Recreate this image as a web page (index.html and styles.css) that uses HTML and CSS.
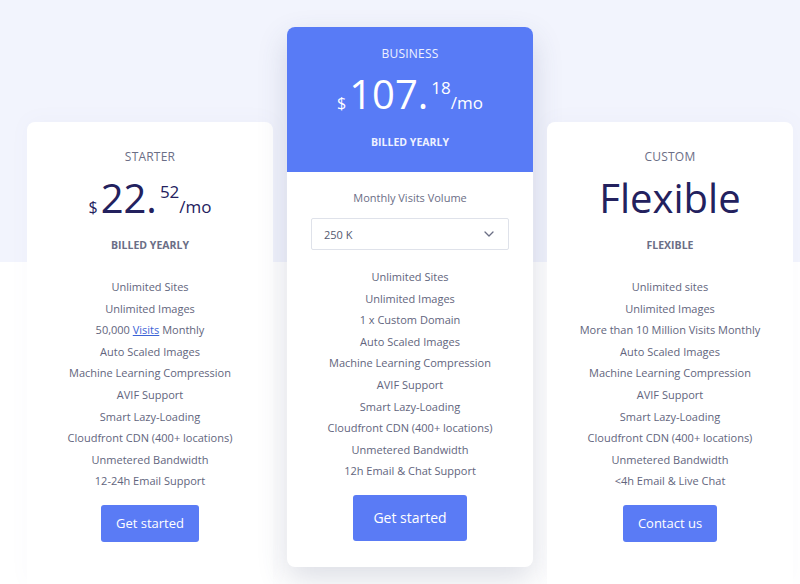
FILE: index.html
```html
<!DOCTYPE html>
<html>
<head>
<meta charset="utf-8">
<link rel="stylesheet" href="styles.css">
</head>
<body>
<div class="page">
  <div class="plans">
    <div class="card side">
      <div class="head">
        <div class="plan-name">STARTER</div>
        <div class="price"><span class="cur">$</span><span class="big">22.</span><span class="cents">52</span><span class="per">/mo</span></div>
        <div class="billed">BILLED YEARLY</div>
      </div>
      <ul class="features">
        <li>Unlimited Sites</li>
        <li>Unlimited Images</li>
        <li>50,000 <a href="#">Visits</a> Monthly</li>
        <li>Auto Scaled Images</li>
        <li>Machine Learning Compression</li>
        <li>AVIF Support</li>
        <li>Smart Lazy-Loading</li>
        <li>Cloudfront CDN (400+ locations)</li>
        <li>Unmetered Bandwidth</li>
        <li>12-24h Email Support</li>
      </ul>
      <a class="btn" href="#">Get started</a>
    </div>

    <div class="card featured">
      <div class="head blue">
        <div class="plan-name">BUSINESS</div>
        <div class="price"><span class="cur">$</span><span class="big">107.</span><span class="cents">18</span><span class="per">/mo</span></div>
        <div class="billed">BILLED YEARLY</div>
      </div>
      <div class="volume">
        <div class="vol-label">Monthly Visits Volume</div>
        <div class="select"><span>250 K</span>
          <svg width="10" height="6" viewBox="0 0 10 6"><path d="M1 1l4 4 4-4" fill="none" stroke="#6b6f85" stroke-width="1.3" stroke-linecap="round" stroke-linejoin="round"/></svg>
        </div>
      </div>
      <ul class="features">
        <li>Unlimited Sites</li>
        <li>Unlimited Images</li>
        <li>1 x Custom Domain</li>
        <li>Auto Scaled Images</li>
        <li>Machine Learning Compression</li>
        <li>AVIF Support</li>
        <li>Smart Lazy-Loading</li>
        <li>Cloudfront CDN (400+ locations)</li>
        <li>Unmetered Bandwidth</li>
        <li>12h Email &amp; Chat Support</li>
      </ul>
      <a class="btn large" href="#">Get started</a>
    </div>

    <div class="card side">
      <div class="head">
        <div class="plan-name">CUSTOM</div>
        <div class="price flex-price">Flexible</div>
        <div class="billed">FLEXIBLE</div>
      </div>
      <ul class="features">
        <li>Unlimited sites</li>
        <li>Unlimited Images</li>
        <li>More than 10 Million Visits Monthly</li>
        <li>Auto Scaled Images</li>
        <li>Machine Learning Compression</li>
        <li>AVIF Support</li>
        <li>Smart Lazy-Loading</li>
        <li>Cloudfront CDN (400+ locations)</li>
        <li>Unmetered Bandwidth</li>
        <li>&lt;4h Email &amp; Live Chat</li>
      </ul>
      <a class="btn" href="#">Contact us</a>
    </div>
  </div>
</div>
</body>
</html>
```

FILE: styles.css
```css
* { box-sizing: border-box; }
html, body { margin: 0; padding: 0; }
body {
  font-family: "Open Sans", "Noto Sans", sans-serif;
  background: #fff;
  width: 800px;
  height: 584px;
  overflow: hidden;
}
.page {
  background: linear-gradient(to bottom, #f2f4fd 0, #f2f4fd 262px, #ffffff 262px);
  height: 584px;
}
.plans {
  display: flex;
  align-items: flex-start;
  gap: 14px;
  padding: 27px 0 0 27px;
}
.card {
  width: 246px;
  background: #fff;
  border-radius: 8px;
  display: flex;
  flex-direction: column;
  align-items: center;
  text-align: center;
}
.side {
  margin-top: 95px;
  height: 462px;
  border-radius: 8px 8px 0 0;
  box-shadow: 0 -2px 20px rgba(120, 130, 170, 0.04);
}
.featured {
  height: 540px;
  overflow: hidden;
  box-shadow: 0 12px 30px rgba(60, 70, 110, 0.18);
}
.head {
  width: 100%;
  padding-top: 27px;
  display: flex;
  flex-direction: column;
  align-items: center;
}
.head.blue {
  background: #587bf6;
  color: #fff;
  height: 145px;
  padding-top: 19px;
}
.plan-name {
  font-size: 12px;
  color: #6b6e86;
  letter-spacing: 0.2px;
  line-height: 16px;
}
.blue .plan-name { color: #eef1ff; }
.price {
  display: flex;
  align-items: baseline;
  color: #23215e;
  margin-top: 11px;
  height: 44px;
}
.blue .price { color: #fff; margin-top: 10px; }
.price .cur { font-size: 16px; margin-right: 3px; }
.price .big { font-size: 40px; line-height: 44px; }
.price .cents { font-size: 17px; align-self: flex-start; margin-top: 4px; margin-left: 3px; }
.price .per { font-size: 17px; }
.flex-price {
  font-size: 40px;
  line-height: 44px;
  display: block;
}
.billed {
  font-size: 10.5px;
  font-weight: 700;
  color: #6b6e86;
  margin-top: 18px;
  line-height: 14px;
}
.blue .billed { color: #eef1ff; margin-top: 19px; }
.volume {
  width: 100%;
  padding: 18px 24px 0;
}
.vol-label {
  font-size: 11px;
  color: #6b6e86;
  line-height: 16px;
}
.select {
  margin-top: 12px;
  height: 32px;
  border: 1px solid #dfe2ea;
  border-radius: 2px;
  display: flex;
  align-items: center;
  justify-content: space-between;
  padding: 0 14px 0 12px;
  font-size: 11px;
  color: #55596f;
}
.features {
  list-style: none;
  margin: 0;
  padding: 0;
  margin-top: 24px;
}
.featured .features { margin-top: 16px; }
.features li {
  font-size: 11px;
  color: #62657d;
  line-height: 21.6px;
}
.features a { color: #3b63d6; text-decoration: underline; }
.btn {
  display: inline-block;
  background: #5a7bf5;
  color: #fff;
  text-decoration: none;
  font-size: 13px;
  border-radius: 3px;
  padding: 0 15px;
  height: 37px;
  line-height: 37px;
  margin-top: 13px;
}
.btn.large {
  font-size: 14px;
  height: 46px;
  line-height: 46px;
  padding: 0 20px;
  margin-top: 13px;
}
```
